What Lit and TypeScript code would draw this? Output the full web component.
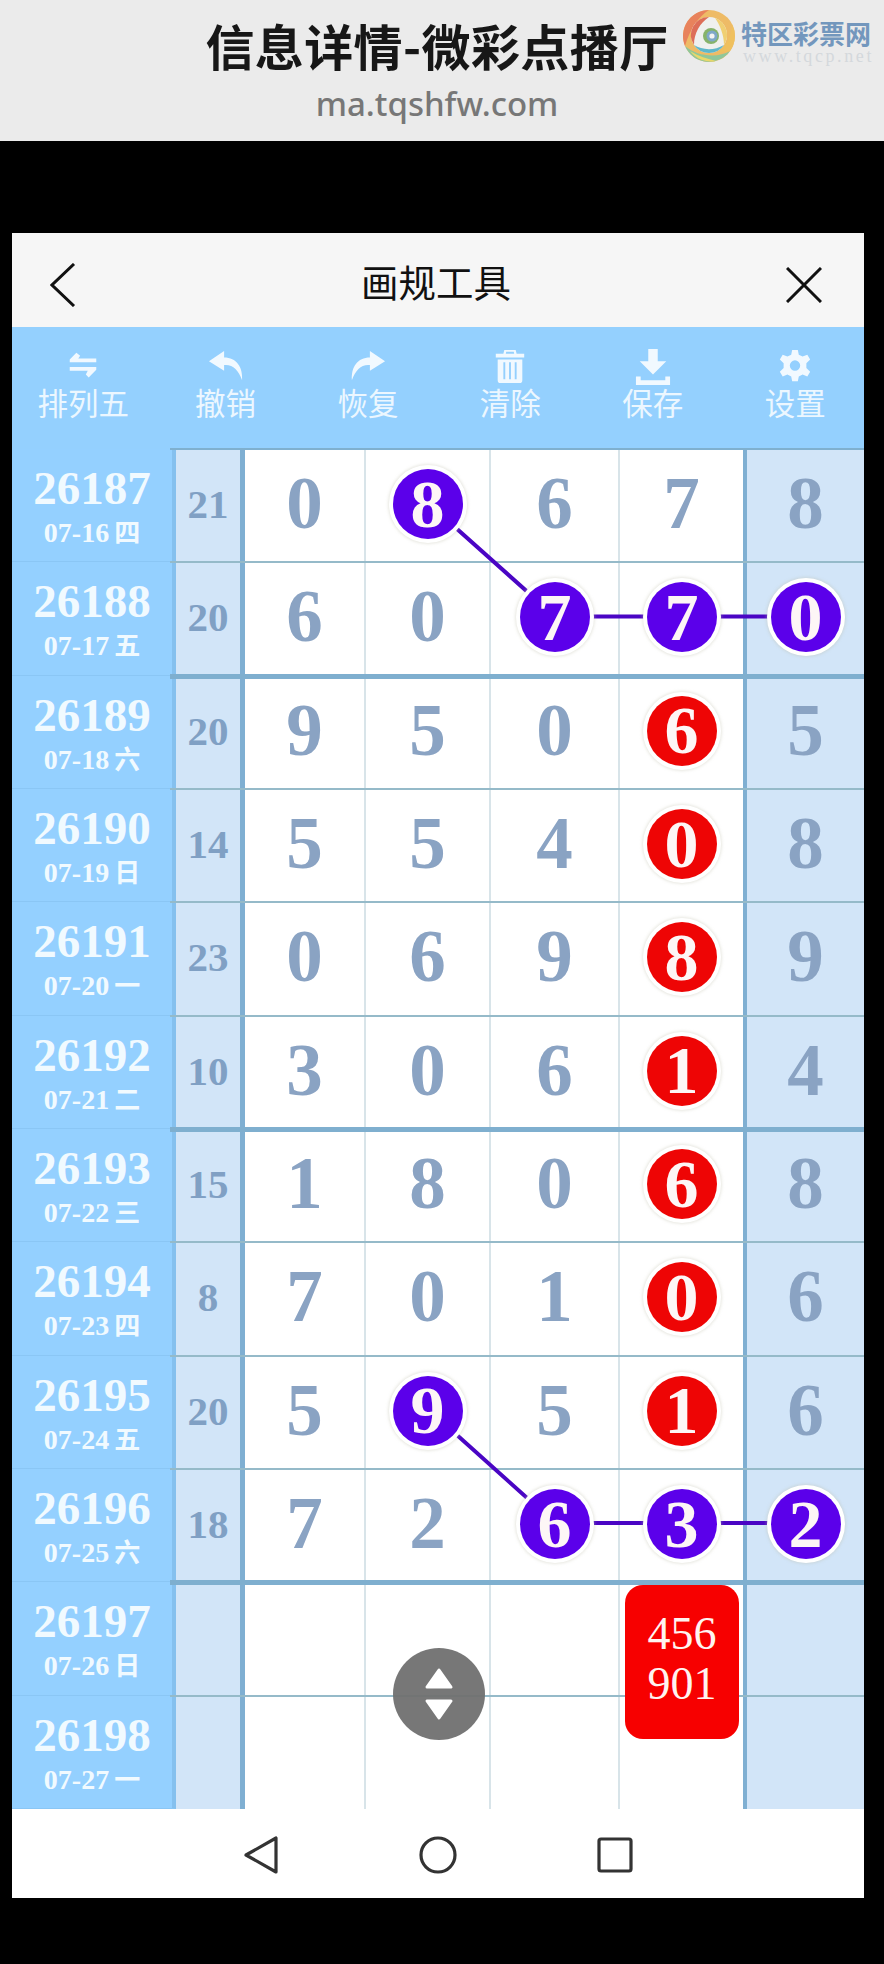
import { LitElement, html, css, svg } from "lit";
import { customElement } from "lit/decorators.js";

type Mark = "" | "p" | "r";
interface Cell { v: string; m: Mark }
interface Row { id: string; date: string; day: string; sum: string; cells: Cell[] }

const c = (s: string): Cell[] =>
  s.split(" ").map((t) => ({ v: t[0], m: (t[1] || "") as Mark }));

const ROWS: Row[] = [
  { id: "26187", date: "07-16", day: "四", sum: "21", cells: c("0 8p 6 7 8") },
  { id: "26188", date: "07-17", day: "五", sum: "20", cells: c("6 0 7p 7p 0p") },
  { id: "26189", date: "07-18", day: "六", sum: "20", cells: c("9 5 0 6r 5") },
  { id: "26190", date: "07-19", day: "日", sum: "14", cells: c("5 5 4 0r 8") },
  { id: "26191", date: "07-20", day: "一", sum: "23", cells: c("0 6 9 8r 9") },
  { id: "26192", date: "07-21", day: "二", sum: "10", cells: c("3 0 6 1r 4") },
  { id: "26193", date: "07-22", day: "三", sum: "15", cells: c("1 8 0 6r 8") },
  { id: "26194", date: "07-23", day: "四", sum: "8", cells: c("7 0 1 0r 6") },
  { id: "26195", date: "07-24", day: "五", sum: "20", cells: c("5 9p 5 1r 6") },
  { id: "26196", date: "07-25", day: "六", sum: "18", cells: c("7 2 6p 3p 2p") },
  { id: "26197", date: "07-26", day: "日", sum: "", cells: c("_ _ _ _ _") },
  { id: "26198", date: "07-27", day: "一", sum: "", cells: c("_ _ _ _ _") },
];

const ICONS = {
  swap: svg`<path d="M11 4 L4 11 V14 H32 V10 H13 L15 7 Z M4 19 H32 V22 L24 30 L21 27 L23 23 H4 Z"/>`,
  undo: svg`<path d="M16 2 L0 13 L16 23 V17 C25 16 31 22 35 33 C36 19 29 9 16 9 Z"/>`,
  redo: svg`<path d="M20 2 L36 13 L20 23 V17 C11 16 5 22 1 33 C0 19 7 9 20 9 Z"/>`,
  trash: svg`<path fill-rule="evenodd" d="M12 1 H24 L25 5 H33 V9 H3 V5 H11 Z M14 3 L13.6 5 H22.4 L22 3 Z M5 11 H31 V33 Q31 36 28 36 H8 Q5 36 5 33 Z M11 14 V32 H13 V14 Z M17 14 V32 H19 V14 Z M23 14 V32 H25 V14 Z"/>`,
  save: svg`<path d="M13 0 H23 V13 H32 L18 27 L4 13 H13 Z M0 29 H5 V33 H31 V29 H36 V38 H0 Z"/>`,
  gear: svg`<path fill-rule="evenodd" d="M15 1 H21 L22 6 L26 8 L31 6 L34 11 L30 15 V20 L34 24 L31 29 L26 27 L22 29 L21 34 H15 L14 29 L10 27 L5 29 L2 24 L6 20 V15 L2 11 L5 6 L10 8 L14 6 Z M18 12 A5.5 5.5 0 1 0 18 23 A5.5 5.5 0 1 0 18 12 Z"/>`,
};

const TOOLS: { label: string; icon: keyof typeof ICONS }[] = [
  { label: "排列五", icon: "swap" },
  { label: "撤销", icon: "undo" },
  { label: "恢复", icon: "redo" },
  { label: "清除", icon: "trash" },
  { label: "保存", icon: "save" },
  { label: "设置", icon: "gear" },
];

const LINKS = [
  "416.5,54.5 543,167.5 669,167.5 793,167.5",
  "416.5,960.5 543,1074 669,1074 793,1074",
];

@customElement("app-root")
export class AppRoot extends LitElement {
  static styles = css`
    :host {
      display: block;
      width: 884px;
      height: 1964px;
      background: #000;
      overflow: hidden;
      font-family: "Liberation Serif", "Noto Sans CJK SC", serif;
    }
    .head {
      position: relative;
      height: 141px;
      background: #ebebeb;
      display: flex;
      flex-direction: column;
      align-items: center;
      box-sizing: border-box;
      padding: 11px 10px 0 0;
      font-family: "Noto Sans CJK SC", sans-serif;
    }
    .head h1 {
      margin: 0;
      font-size: 49px;
      line-height: 68px;
      font-weight: 700;
      color: #171717;
      letter-spacing: 0.4px;
      white-space: nowrap;
    }
    .head p {
      margin: 4px 0 0;
      font-family: "Noto Sans", sans-serif;
      font-size: 33px;
      line-height: 42px;
      font-weight: 500;
      color: #777;
    }
    .mark {
      position: absolute;
      left: 682px;
      top: 9px;
      display: flex;
      gap: 5px;
    }
    .mark .txt { display: flex; flex-direction: column; }
    .mark b {
      font-size: 26px;
      line-height: 32px;
      margin-top: 8px;
      font-weight: 700;
      color: #7397bd;
      white-space: nowrap;
    }
    .mark i {
      font-family: "Liberation Serif", serif;
      font-style: normal;
      font-size: 18px;
      line-height: 14px;
      letter-spacing: 2.6px;
      color: #d4d8dc;
      white-space: nowrap;
      margin-left: 2px;
    }
    .app {
      margin: 92px 20px 0 12px;
      width: 852px;
      display: flex;
      flex-direction: column;
    }
    .bar {
      height: 94px;
      background: #f6f6f6;
      display: grid;
      grid-template-columns: 1fr auto 1fr;
      align-items: center;
      padding: 0 42px 0 38px;
      box-sizing: border-box;
      font-family: "Noto Sans CJK SC", sans-serif;
      font-size: 37.5px;
      color: #111;
    }
    .bar svg { fill: none; stroke: #111; stroke-width: 3; display: block; margin-top: 9px; }
    .bar svg:last-child { justify-self: end; }
    .tools {
      height: 122px;
      background: #94d0fe;
      display: grid;
      grid-template-columns: repeat(6, 142.4px);
      font-family: "Noto Sans CJK SC", sans-serif;
      color: #ecf7ff;
      font-size: 30.5px;
    }
    .tool {
      display: flex;
      flex-direction: column;
      align-items: center;
      padding-top: 22px;
    }
    .tool svg { width: 36px; height: 36px; fill: #f1f9ff; display: block; }
    .tool span { line-height: 38px; margin-top: -2px; white-space: nowrap; }
    .board { position: relative; height: 1360px; display: grid; grid-template-rows: repeat(12, 1fr); }
    .links { position: absolute; inset: 0; width: 852px; height: 1360px; z-index: 1; pointer-events: none; }
    .links polyline { fill: none; stroke: #4a05c4; stroke-width: 4; }
    .row {
      position: relative;
      display: grid;
      grid-template-columns: 164px 69px 121px 125px 129px 123px 121px;
      background: #fff;
    }
    .row::before {
      content: "";
      position: absolute;
      left: 158px;
      right: 0;
      top: -1px;
      height: 2px;
      background: #95bac9;
      z-index: 1;
    }
    .row.first::before { background: #7fb0cf; }
    .row.thick::before { top: -2px; height: 5px; background: #7fafcf; }
    .row:last-child::after {
      content: "";
      position: absolute;
      left: 158px;
      right: 0;
      bottom: 0;
      height: 2px;
      background: #a4bccb;
      z-index: 1;
    }
    .when {
      background: #94d0ff;
      border-right: 4px solid #85c0ee;
      border-bottom: 1px solid #8ac6f5;
      color: #f1faff;
      font-weight: 700;
      text-align: center;
      display: flex;
      flex-direction: column;
      align-items: center;
      padding-top: 18px;
      box-sizing: border-box;
    }
    .when .id { font-size: 47px; line-height: 42px; }
    .when .d { font-size: 28px; line-height: 38px; margin-top: 3px; white-space: nowrap; }
    .when .d em { font-style: normal; font-size: 26px; font-family: "Noto Sans CJK SC", sans-serif; margin-left: 5px; }
    .cell {
      display: flex;
      align-items: center;
      justify-content: center;
      font-weight: 700;
      color: #8aa3c3;
      font-size: 73px;
      box-sizing: border-box;
      padding-bottom: 3px;
      border-right: 2px solid #d8e4e9;
    }
    .sum {
      background: #d2e5f8;
      border-right: 5px solid #7fafd2;
      font-size: 41px;
      color: #80a0c4;
    }
    .cell.last { background: #d2e5f8; border-right: 0; border-left: 4px solid #7fafd2; }
    .cell.d4 { border-right: 0; }
    .ball {
      position: relative;
      z-index: 2;
      width: 70px;
      height: 70px;
      border-radius: 50%;
      display: flex;
      align-items: center;
      justify-content: center;
      color: #fdf6f6;
      font-size: 68px;
      box-shadow: 0 0 0 4px #fff, 0 0 3px 5px rgba(190, 190, 170, .35);
    }
    .ball.p { background: #5b00ea; }
    .ball.r { background: #ee0505; }
    .float {
      position: absolute;
      left: 381px;
      top: 1199px;
      width: 92px;
      height: 92px;
      border-radius: 50%;
      background: rgba(112, 112, 112, .95);
      z-index: 3;
      display: flex;
      align-items: center;
      justify-content: center;
    }
    .float svg { display: block; fill: #fff; stroke: #fff; stroke-width: 3; stroke-linejoin: round; }
    .pick {
      position: absolute;
      left: 613px;
      top: 1136px;
      width: 114px;
      height: 154px;
      border-radius: 18px;
      background: #f70000;
      color: #fff3f0;
      z-index: 3;
      font-size: 46px;
      line-height: 50px;
      display: flex;
      flex-direction: column;
      align-items: center;
      justify-content: center;
      padding-bottom: 6px;
      box-sizing: border-box;
    }
    .nav {
      height: 89px;
      background: #fff;
      display: flex;
      align-items: center;
      justify-content: center;
      gap: 137px;
      padding-top: 2px;
      box-sizing: border-box;
    }
    .nav svg { display: block; fill: none; stroke: #333; stroke-width: 3.2; stroke-linejoin: round; }
  `;

  private cell(x: Cell, i: number) {
    const cls = ["cell", i === 3 ? "d4" : "", i === 4 ? "last" : ""].join(" ");
    const v = x.v === "_" ? "" : x.v;
    return html`<div class=${cls}>${x.m ? html`<div class="ball ${x.m}">${v}</div>` : v}</div>`;
  }

  private logo() {
    return html`<svg width="54" height="54" viewBox="0 0 54 54">
      <circle cx="27" cy="27" r="26" fill="#eebb66" />
      <path d="M27 1 A26 26 0 0 0 3 37 C8 20 16 8 27 1Z" fill="#e8825c" />
      <path d="M3 37 A26 26 0 0 0 48 42 C36 49 16 48 3 37Z" fill="#8fc79a" />
      <path d="M8 42 A26 26 0 0 0 34 52 C26 50 16 47 8 42Z" fill="#e9d86a" />
      <path d="M48 42 A26 26 0 0 0 50 15 C50 25 45 36 36 44Z" fill="#efc05e" />
      <circle cx="27" cy="26" r="18" fill="#eff0ee" />
      <path d="M27 8 A18 18 0 0 0 12 36 C12 24 18 14 27 8Z" fill="#dd6e58" />
      <path d="M12 36 A18 18 0 0 0 42 36 C32 42 20 41 12 36Z" fill="#5fb7c9" />
      <path d="M42 36 A18 18 0 0 0 33 9 C38 16 42 26 42 36Z" fill="#f0cf72" />
      <circle cx="28" cy="27" r="11" fill="#eff0ee" />
      <circle cx="29" cy="27" r="8" fill="#86b36a" />
      <circle cx="30" cy="27" r="5.5" fill="#7fa8c8" />
      <circle cx="30" cy="27" r="2.6" fill="#f4f4f2" />
    </svg>`;
  }

  render() {
    return html`
      <div class="head">
        <h1>信息详情-微彩点播厅</h1>
        <p>ma.tqshfw.com</p>
        <div class="mark">
          ${this.logo()}
          <div class="txt"><b>特区彩票网</b><i>www.tqcp.net</i></div>
        </div>
      </div>
      <div class="app">
        <div class="bar">
          <svg width="26" height="44" viewBox="0 0 26 44"><path d="M24 1 L2 22 L24 43" /></svg>
          <span>画规工具</span>
          <svg width="36" height="36" viewBox="0 0 36 36"><path d="M1 1 L35 35 M35 1 L1 35" /></svg>
        </div>
        <div class="tools">
          ${TOOLS.map(
            (t) => html`<div class="tool">
              <svg viewBox="0 0 36 38">${ICONS[t.icon]}</svg>
              <span>${t.label}</span>
            </div>`
          )}
        </div>
        <div class="board">
          ${ROWS.map(
            (r, i) => html`<div class="row ${i === 0 ? "first" : ""} ${i === 2 || i === 6 || i === 10 ? "thick" : ""}">
              <div class="when">
                <div class="id">${r.id}</div>
                <div class="d">${r.date}<em>${r.day}</em></div>
              </div>
              <div class="cell sum">${r.sum}</div>
              ${r.cells.map((x, j) => this.cell(x, j))}
            </div>`
          )}
          <svg class="links" viewBox="0 0 852 1360">
            ${LINKS.map((p) => svg`<polyline points=${p} />`)}
          </svg>
          <div class="pick"><span>456</span><span>901</span></div>
          <div class="float">
            <svg width="30" height="56" viewBox="0 0 30 56">
              <path d="M15 4 L27 21 H3 Z M3 35 H27 L15 52 Z" />
            </svg>
          </div>
        </div>
        <div class="nav">
          <svg width="40" height="40" viewBox="0 0 40 40"><path d="M35 3 V37 L5 20 Z" /></svg>
          <svg width="40" height="40" viewBox="0 0 40 40"><circle cx="20" cy="20" r="17" /></svg>
          <svg width="40" height="40" viewBox="0 0 40 40"><rect x="4" y="4" width="32" height="32" rx="2" /></svg>
        </div>
      </div>
    `;
  }
}
